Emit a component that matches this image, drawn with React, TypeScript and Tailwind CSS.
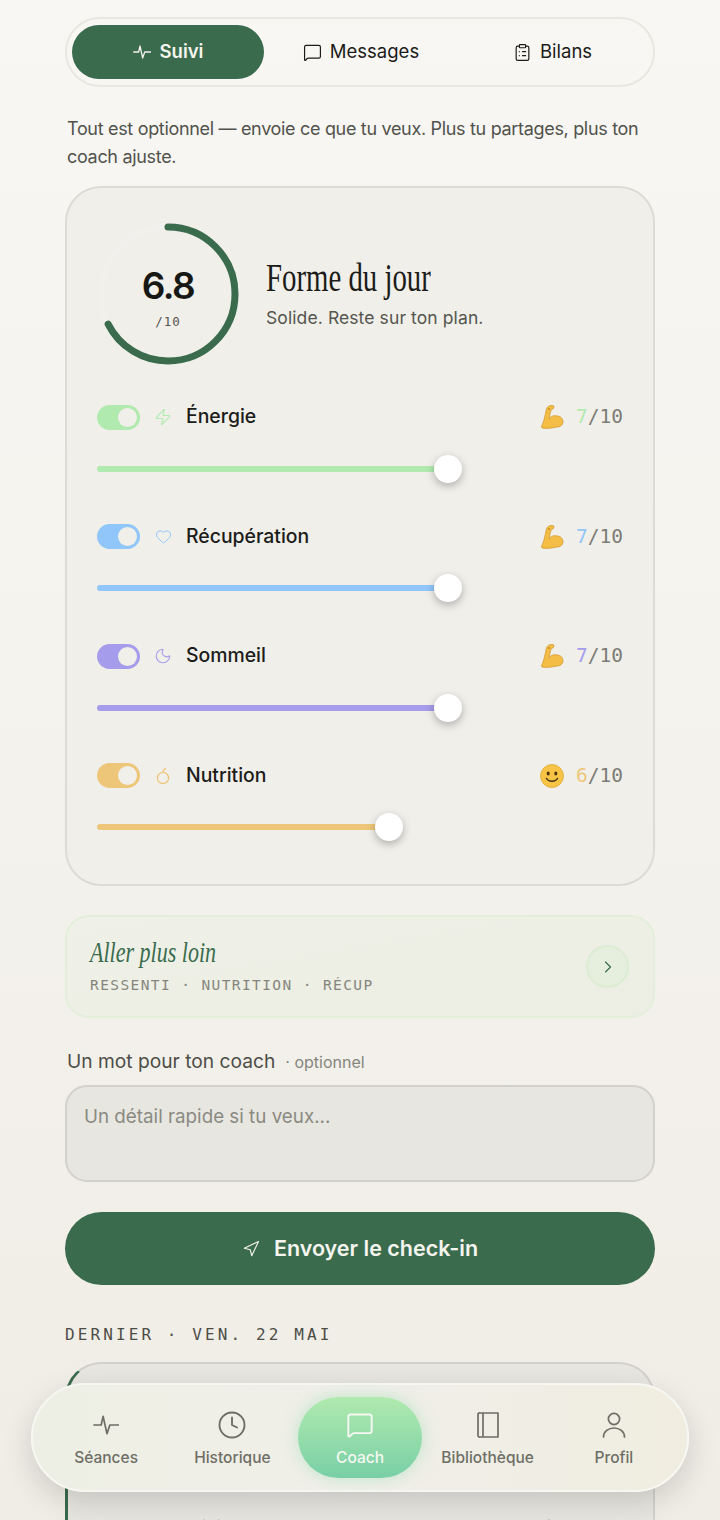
import React from 'react';
import { ChevronRight, ClipboardList, Clock, Heart, MessageSquare, Moon, Navigation, Zap } from 'lucide-react';

const serif = { fontFamily: '"Liberation Serif", serif' };

const Pulse = ({ size, strokeWidth }: { size: number; strokeWidth: number }) => (
  <svg width={size} height={size} viewBox="0 0 27 26" fill="none" stroke="currentColor" strokeWidth={strokeWidth} strokeLinecap="round" strokeLinejoin="round">
    <path d="M1 13h7.500l2-9 4 18 3-9h9" />
  </svg>
);

const Muscle = () => (
  <svg width="24" height="24" viewBox="0 0 24 24">
    <path d="M2 23c-1-1 0-3 1-5 1-3 2-7 3-12 0-2 1-4 3-5 2-1 5-1 5 1 0 2-2 2-3 3l-1 4c0 2-1 4-1 5 2-3 5-4 8-3 3 0 6 2 6 6 0 3-3 5-6 5-5 1-11 2-15 1z" fill="#f4bd45" stroke="#cf9426" strokeWidth="0.7" />
    <circle cx="9" cy="4" r="1" fill="#c98a1c" />
  </svg>
);

const Smile = () => (
  <svg width="24" height="24" viewBox="0 0 24 24">
    <circle cx="12" cy="12" r="11.500" fill="#f7c445" stroke="#d89a25" strokeWidth="0.6" />
    <ellipse cx="8.200" cy="9.500" rx="1.500" ry="2" fill="#4a3310" />
    <ellipse cx="15.800" cy="9.500" rx="1.500" ry="2" fill="#4a3310" />
    <path d="M6.500 14.500c2 3.600 9 3.600 11 0" fill="none" stroke="#4a3310" strokeWidth="1.500" strokeLinecap="round" />
  </svg>
);

const Fruit = ({ className }: { className?: string }) => (
  <svg className={className} width="18" height="18" viewBox="0 0 18 18" fill="none" stroke="currentColor" strokeWidth="1.300" strokeLinecap="round">
    <circle cx="9" cy="11" r="5.600" />
    <path d="M9 5.400c0-1.600.8-3 2.400-3.800" />
  </svg>
);

const BookIcon = () => (
  <svg width="26" height="26" viewBox="0 0 26 26" fill="none" stroke="currentColor" strokeWidth="1.700" strokeLinejoin="round">
    <path d="M5 1h18v24H5a1.500 1.500 0 0 1-2-1.500v-21A1.500 1.500 0 0 1 5 1z" />
    <path d="M8 1v24" />
  </svg>
);

const PersonIcon = () => (
  <svg width="26" height="26" viewBox="0 0 26 26" fill="none" stroke="currentColor" strokeWidth="1.700" strokeLinecap="round">
    <circle cx="13" cy="7" r="5.600" />
    <path d="M2.500 25c0-5.500 5-9 10.500-9s10.500 3.500 10.500 9" />
  </svg>
);

const metrics = [
  { label: 'Énergie', score: '7', emoji: <Muscle />, text: 'text-[#b0eaaf]', bg: 'bg-[#b0eaaf]', width: 'w-[351px]', knob: 'left-[351px]', icon: <Zap size={20} strokeWidth={1.4} className="text-[#b0eaaf]" /> },
  { label: 'Récupération', score: '7', emoji: <Muscle />, text: 'text-[#90c6fa]', bg: 'bg-[#90c6fa]', width: 'w-[351px]', knob: 'left-[351px]', icon: <Heart size={17} strokeWidth={1.4} className="text-[#90c6fa]" /> },
  { label: 'Sommeil', score: '7', emoji: <Muscle />, text: 'text-[#a59ceb]', bg: 'bg-[#a59ceb]', width: 'w-[351px]', knob: 'left-[351px]', icon: <Moon size={20} strokeWidth={1.4} className="text-[#a59ceb]" /> },
  { label: 'Nutrition', score: '6', emoji: <Smile />, text: 'text-[#eec679]', bg: 'bg-[#eec679]', width: 'w-[292px]', knob: 'left-[292px]', icon: <Fruit className="text-[#eec679]" /> },
];

const navItems = [
  { label: 'Séances', icon: <Pulse size={26} strokeWidth={1.800} /> },
  { label: 'Historique', icon: <Clock size={30} strokeWidth={1.500} /> },
  { label: 'Coach', icon: <MessageSquare size={28} strokeWidth={1.600} />, active: true },
  { label: 'Bibliothèque', icon: <BookIcon /> },
  { label: 'Profil', icon: <PersonIcon /> },
];

export default function App() {
  return (
    <div className="relative h-[1520px] overflow-hidden bg-gradient-to-b from-[#f8f7f4] to-[#f0ede6] font-['Inter',sans-serif] text-[#1c1c19]">
      <div className="flex flex-col px-[65px] pt-[17px]">
        {/* Tabs */}
        <div className="flex h-[70px] items-stretch rounded-full border-2 border-[#e8e7e2] py-[6px] pl-[5px] pr-[6px] text-[18.500px]">
          <div className="flex w-[192px] items-center justify-center gap-[9px] rounded-full bg-[#3a6b4d] font-semibold text-[#f5f4ee]">
            <Pulse size={18} strokeWidth={1.900} />
            Suivi
          </div>
          <div className="flex w-[194px] items-center justify-center gap-[8px]">
            <MessageSquare size={19} strokeWidth={1.500} />
            Messages
          </div>
          <div className="flex flex-1 items-center justify-center gap-[8px]">
            <ClipboardList size={19} strokeWidth={1.500} />
            Bilans
          </div>
        </div>

        <p className="mx-[2px] mt-[28px] text-[18px] leading-[28px] tracking-[-0.32px] text-[#52524c]">
          Tout est optionnel — envoie ce que tu veux. Plus tu partages, plus ton coach ajuste.
        </p>

        {/* Forme du jour */}
        <div className="mt-[15px] h-[700px] rounded-[36px] border-2 border-[#dcdbd5] bg-[#f0efea] px-[30px] pt-[35px]">
          <div className="flex items-center gap-[27px]">
            <div className="relative h-[142px] w-[142px] shrink-0">
              <svg width="142" height="142" viewBox="0 0 142 142">
                <circle cx="71" cy="71" r="67" fill="none" stroke="#f1f0ec" strokeWidth="7" />
                <circle cx="71" cy="71" r="67" fill="none" stroke="#3a6b4d" strokeWidth="7" strokeLinecap="round" strokeDasharray="284 421" transform="rotate(-90 71 71)" />
              </svg>
              <div className="absolute inset-0 flex flex-col items-center justify-center pt-[8px]">
                <span className="text-[37px] font-semibold leading-[44px] tracking-[-1.500px] text-[#171714]">6.8</span>
                <span className="mt-[5px] font-['DejaVu_Sans_Mono',monospace] text-[12.500px] tracking-[1px] text-[#55554f]">/10</span>
              </div>
            </div>
            <div>
              <h2 className="origin-left scale-x-[0.72] whitespace-nowrap text-[40px] leading-[42px] text-[#1c1c19]" style={serif}>Forme du jour</h2>
              <p className="mt-[6px] text-[17.500px] tracking-[0.1px] text-[#55554f]">Solide. Reste sur ton plan.</p>
            </div>
          </div>

          <div className="mt-[39.500px] flex flex-col gap-[52.500px]">
            {metrics.map((m) => (
              <div key={m.label}>
                <div className="flex h-[25px] items-center">
                  <div className={`flex h-[25px] w-[43px] items-center justify-end rounded-full pr-[3px] ${m.bg}`}>
                    <div className="h-[19px] w-[19px] rounded-full bg-[#f0efea]" />
                  </div>
                  <div className="ml-[14px] flex w-[18px] justify-center">{m.icon}</div>
                  <span className="ml-[14px] text-[19.400px] font-medium">{m.label}</span>
                  <div className="ml-auto flex items-center gap-[12px] font-['DejaVu_Sans_Mono',monospace] text-[19.500px] text-[#7c7c75]">
                    {m.emoji}
                    <span><span className={m.text}>{m.score}</span>/10</span>
                  </div>
                </div>
                <div className="relative mt-[36px] h-[6px]">
                  <div className={`h-[6px] rounded-full ${m.bg} ${m.width}`} />
                  <div className={`absolute top-[-11px] ml-[-14px] h-[28px] w-[28px] rounded-full bg-white shadow-[0_3px_8px_rgba(0,0,0,0.28)] ${m.knob}`} />
                </div>
              </div>
            ))}
          </div>
        </div>

        {/* Aller plus loin */}
        <div className="mt-[29px] flex h-[103px] items-center justify-between rounded-[24px] border-2 border-[#e4efdb] bg-gradient-to-br from-[#eff1e8] to-[#eceee3] pl-[23px] pr-[24px]">
          <div>
            <div className="origin-left scale-x-[0.76] whitespace-nowrap text-[29px] italic leading-[30px] text-[#3a6b4d]" style={serif}>Aller plus loin</div>
            <div className="mt-[8px] font-['DejaVu_Sans_Mono',monospace] text-[14.500px] tracking-[1.400px] text-[#85857d]">RESSENTI · NUTRITION · RÉCUP</div>
          </div>
          <div className="flex h-[43px] w-[43px] items-center justify-center rounded-full border-2 border-[#dcecd2] bg-[#e6eedd] text-[#3a6b4d]">
            <ChevronRight size={20} strokeWidth={1.400} />
          </div>
        </div>

        {/* Note */}
        <div className="mx-[2px] mt-[30px] flex items-baseline gap-[10px] text-[19.200px] leading-[26px] text-[#4d4d47]">
          Un mot pour ton coach
          <span className="text-[16px] text-[#85857d]">· optionnel</span>
        </div>
        <div className="mt-[10px] h-[97px] rounded-[22px] border-2 border-[#d2d1cb] bg-[#e8e6e1] px-[17px] pt-[16px] text-[18.800px] leading-[28px] text-[#8a8a82]">
          Un détail rapide si tu veux...
        </div>

        <div className="mt-[30px] flex h-[73px] items-center justify-center gap-[14px] rounded-full bg-[#3a6b4d] text-[21.500px] font-semibold text-[#f5f4ee]">
          <Navigation size={18} strokeWidth={1.500} />
          Envoyer le check-in
        </div>

        <div className="mt-[40px] font-['DejaVu_Sans_Mono',monospace] text-[16px] leading-[20px] tracking-[3.100px] text-[#4d4d47]">DERNIER · VEN. 22 MAI</div>

        {/* Dernier check-in */}
        <div className="mt-[17px] h-[200px] rounded-[36px] border-2 border-l-[3px] border-[#d2d1cb] border-l-[#3a6b4d] bg-[#e8e6e1] px-[22px] pt-[150px] text-[16px] italic text-[#6b6b64]">
          « Tu as bien géré ta semaine, continue comme ça sur le profil. »
        </div>
      </div>

      {/* Bottom nav */}
      <nav className="absolute left-[31px] top-[1383px] flex h-[109px] w-[658px] items-center rounded-full border-2 border-[#f7f7f2] bg-gradient-to-r from-[#eeefe4] via-[#f0efe9] to-[#f0ede0] px-[10px] shadow-[0_10px_30px_rgba(0,0,0,0.15)]">
        {navItems.map((item) => (
          <div
            key={item.label}
            className={
              item.active
                ? 'mx-[2.500px] flex h-[81px] w-[124px] shrink-0 flex-col items-center justify-center gap-[7px] rounded-full bg-gradient-to-b from-[#b0eaaf] to-[#78cfa6] pt-[5px] text-[15.500px] font-medium text-[#f7f8f2] shadow-[0_0_16px_rgba(140,220,170,0.5)]'
                : 'flex h-[81px] flex-1 flex-col items-center justify-center gap-[7px] pt-[5px] text-[15.500px] font-medium text-[#6e6e66]'
            }
          >
            <div className="flex h-[28px] items-center">{item.icon}</div>
            {item.label}
          </div>
        ))}
      </nav>
    </div>
  );
}
